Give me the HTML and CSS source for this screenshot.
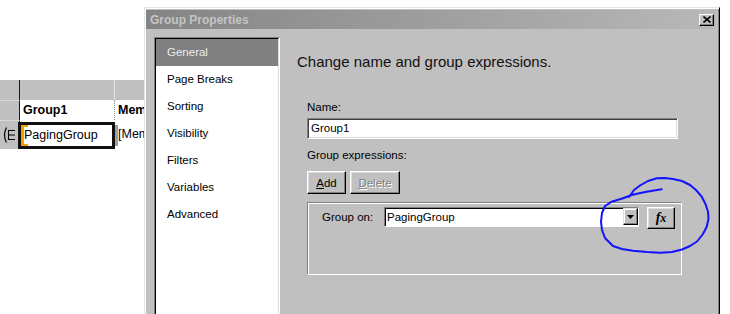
FILE: index.html
```html
<!DOCTYPE html>
<html lang="en">
<head>
    <meta charset="UTF-8">
    <title>Group Properties</title>
    <link rel="stylesheet" href="styles.css">
</head>
<body>

    <!-- Report grid behind the dialog -->
    <div class="sheet">
        <div class="rowhead"></div>
        <div class="colhead colhead-b"></div>
        <div class="colhead"></div>

        <div class="rowhead rowhead-line"></div>
        <div class="cell cell-bold cell-dotted">Group1</div>
        <div class="cell cell-bold">Mem</div>

        <div class="rowhead rowhead-line rowhead-icon">
            <svg width="14" height="18" viewBox="0 0 14 18">
                <path d="M4.5 1.5 Q0.5 9 4.5 16.5" fill="none" stroke="#000" stroke-width="1.2"/>
                <path d="M6.5 4 V14 M6.5 4.5 H13 M6.5 9 H13 M6.5 13.5 H13" fill="none" stroke="#000" stroke-width="1.1"/>
            </svg>
        </div>
        <div class="cell cell-selected">PagingGroup</div>
        <div class="cell cell-tall">[Mem</div>
    </div>

    <!-- Dialog window -->
    <div class="dialog">
        <div class="titlebar">
            <span>Group Properties</span>
            <button class="close">
                <svg width="8" height="7" viewBox="0 0 8 7">
                    <path d="M0.5 0.5 L7.5 6.5 M7.5 0.5 L0.5 6.5" stroke="#000" stroke-width="1.6"/>
                </svg>
            </button>
        </div>

        <div class="dlg-body">
            <div class="nav">
                <ul class="nav-list">
                    <li class="nav-item active">General</li>
                    <li class="nav-item">Page Breaks</li>
                    <li class="nav-item">Sorting</li>
                    <li class="nav-item">Visibility</li>
                    <li class="nav-item">Filters</li>
                    <li class="nav-item">Variables</li>
                    <li class="nav-item">Advanced</li>
                </ul>
            </div>

            <div class="panel">
                <h1>Change name and group expressions.</h1>

                <div class="form">
                    <div class="label label-name">Name:</div>
                    <div class="textbox">Group1</div>

                    <div class="label label-expr">Group expressions:</div>
                    <div class="btns">
                        <button class="btn btn-add"><u>A</u>dd</button>
                        <button class="btn btn-delete" disabled><u>D</u>elete</button>
                    </div>

                    <div class="groupbox">
                        <span class="group-label">Group on:</span>
                        <div class="combo">
                            <span>PagingGroup</span>
                            <span class="drop">
                                <svg width="7" height="4" viewBox="0 0 7 4"><path d="M0 0 H7 L3.5 4 Z" fill="#000"/></svg>
                            </span>
                        </div>
                        <button class="btn btn-fx"><i>f<span class="fx-x">x</span></i></button>
                    </div>
                </div>
            </div>
        </div>
    </div>

    <!-- Hand-drawn blue circle -->
    <svg class="ink" width="730" height="314" viewBox="0 0 730 314">
        <polyline fill="none" stroke="#1212ff" stroke-width="2" stroke-linejoin="round" stroke-linecap="round"
            points="661.7,189.3 654,190.5 646.7,191.7 638,193.5 631.7,195 623,198.3 611.7,201.7 605,206 602,213 601,221.7 602,230 605,238 613,246 622,249 633,250.7 647,252 660,252.7 672,252 682,249.5 690,246 697,241.5 703,234 706.7,226.7 708.5,219 708,211.7 705.5,204 701.7,196.7 696,190 690,185 682,181 673,179 665,178 656.7,178.3 648,181 640,185.5 634,190 629,197"/>
    </svg>

</body>
</html>
```

FILE: styles.css
```css
/* General Page Styles */
body {
    margin: 0;
    width: 730px;
    height: 314px;
    overflow: hidden;
    position: relative;
    background: #fff;
    font-family: "Liberation Sans", Arial, sans-serif;
}

/* Report grid */
.sheet {
    display: grid;
    grid-template-columns: 20px 95px 29px;
    grid-template-rows: 20px 20px 29px;
    margin-top: 80px;
}

.rowhead {
    background: #c0c0c0;
    border-right: 1px solid #1a1a1a;
}

.rowhead-line {
    border-top: 1px solid #d8d8d8;
}

.rowhead-icon {
    display: flex;
    align-items: center;
    padding-left: 2px;
}

.colhead {
    background: #c0c0c0;
}

.colhead-b {
    border-right: 1px solid #e4e4e4;
}

.cell {
    background: #fff;
    font-size: 12.5px;
    line-height: 20px;
    padding-left: 3px;
    white-space: nowrap;
    overflow: hidden;
    color: #000;
}

.cell-bold {
    font-weight: bold;
}

.cell-dotted {
    border-right: 1px dotted #909090;
}

.cell-tall {
    line-height: 29px;
}

.cell-selected {
    position: relative;
    overflow: visible;
    margin: 2px 0 0 -2px;
    border: 3px solid #111;
    line-height: 21px;
}

.cell-selected::before {
    content: "";
    position: absolute;
    left: 0;
    top: 0;
    bottom: 0;
    width: 4px;
    border: 2px solid #f2a000;
    border-left-width: 3px;
    border-right: none;
}

.cell-selected::after {
    content: "";
    position: absolute;
    right: -6px;
    top: 0;
    bottom: 0;
    width: 3px;
    background: #a0a0a0;
}

/* Dialog */
.dialog {
    position: absolute;
    left: 144px;
    top: 7px;
    width: 576px;
    height: 320px;
    box-sizing: border-box;
    display: flex;
    flex-direction: column;
    background: #c0c0c0;
    border: 1px solid;
    border-color: #e4e4e4 #000 #000 #e4e4e4;
    box-shadow: inset 1px 1px #fff, inset -1px -1px #808080;
    padding: 2px 3px 0 1px;
    font-size: 11.5px;
    color: #000;
}

.titlebar {
    height: 19px;
    display: flex;
    align-items: center;
    justify-content: space-between;
    padding: 0 2px 0 4px;
    background: linear-gradient(to right, #848484, #b8b8b8);
    color: #c4c4c4;
    font-weight: bold;
    font-size: 12px;
}

.close {
    width: 15px;
    height: 12px;
    padding: 0;
    display: flex;
    align-items: center;
    justify-content: center;
    background: #c0c0c0;
    border: 1px solid;
    border-color: #fff #000 #000 #fff;
    box-shadow: inset -1px -1px #808080;
}

.dlg-body {
    flex: 1;
    display: flex;
}

/* Sidebar */
.nav {
    margin: 8px 0 0 8px;
    width: 126px;
    box-sizing: border-box;
    border: 1px solid;
    border-color: #808080 #fff #fff #808080;
}

.nav-list {
    list-style: none;
    margin: 0;
    padding: 0;
    height: 100%;
    background: #fff;
    border: 1px solid;
    border-color: #000 #dcdcdc #dcdcdc #000;
}

.nav-item {
    height: 27px;
    line-height: 27px;
    padding-left: 11px;
    font-size: 11.5px;
}

.nav-item.active {
    background: #808080;
    color: #ececec;
}

/* Right panel */
.panel {
    flex: 1;
    padding-left: 17px;
}

.panel h1 {
    margin: 23px 0 0;
    font-size: 15px;
    font-weight: normal;
    line-height: 20px;
    color: #111;
}

.form {
    padding-left: 10px;
}

.label {
    line-height: 14px;
}

.label-name {
    margin-top: 28px;
}

.label-expr {
    margin-top: 9px;
}

.textbox {
    margin-top: 4px;
    width: 371px;
    height: 21px;
    box-sizing: border-box;
    padding-left: 3px;
    line-height: 19px;
    background: #fff;
    border: 1px solid;
    border-color: #808080 #fff #fff #808080;
    box-shadow: inset 1px 1px #404040, inset -1px -1px #dcdcdc;
}

.btns {
    display: flex;
    gap: 4px;
    margin-top: 9px;
}

.btn {
    height: 23px;
    padding: 0;
    font-family: inherit;
    font-size: 11.5px;
    color: #000;
    background: #c0c0c0;
    border: 1px solid;
    border-color: #fff #000 #000 #fff;
    box-shadow: inset -1px -1px #808080, inset 1px 1px #dfdfdf;
}

.btn-add {
    width: 39px;
}

.btn-delete {
    width: 50px;
    color: #808080;
    text-shadow: 1px 1px #fff;
}

.groupbox {
    margin-top: 8px;
    width: 375px;
    height: 73px;
    box-sizing: border-box;
    display: flex;
    align-items: flex-start;
    padding: 4px 0 0 14px;
    border: 1px solid;
    border-color: #808080 #fff #fff #808080;
    box-shadow: inset 1px 1px #fff;
}

.group-label {
    width: 62px;
    line-height: 20px;
}

.combo {
    width: 255px;
    height: 20px;
    box-sizing: border-box;
    display: flex;
    align-items: center;
    justify-content: space-between;
    padding-left: 2px;
    background: #fff;
    border: 1px solid;
    border-color: #808080 #fff #fff #808080;
    box-shadow: inset 1px 1px #000;
}

.drop {
    width: 15px;
    height: 17px;
    box-sizing: border-box;
    display: flex;
    align-items: center;
    justify-content: center;
    align-self: flex-start;
    background: #c0c0c0;
    border: 1px solid;
    border-color: #dfdfdf #000 #000 #dfdfdf;
    box-shadow: inset -1px -1px #808080, inset 1px 1px #fff;
}

.btn-fx {
    margin-left: 8px;
    width: 28px;
    height: 22px;
    font-family: "Liberation Serif", "Times New Roman", serif;
    font-weight: bold;
    font-size: 14px;
}

.fx-x {
    font-size: 12px;
}

/* Annotation */
.ink {
    position: absolute;
    left: 0;
    top: 0;
    pointer-events: none;
}
```
